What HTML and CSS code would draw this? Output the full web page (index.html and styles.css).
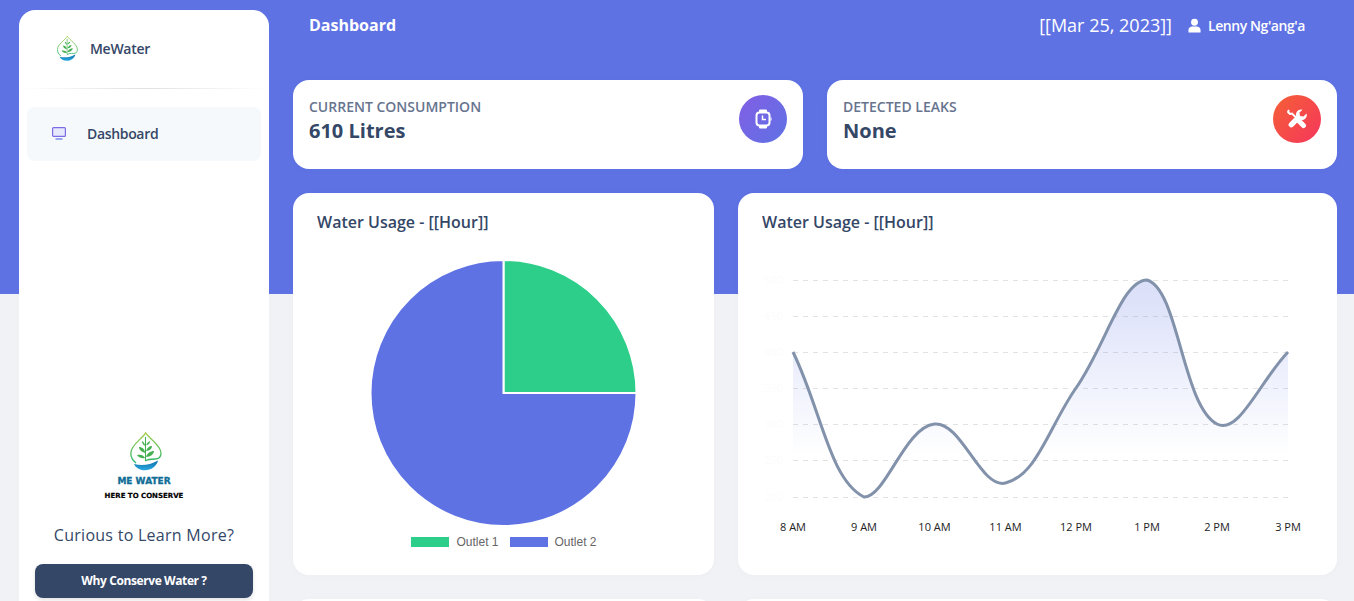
FILE: index.html
```html
<!DOCTYPE html>
<html>
<head>
    <meta charset="UTF-8">
    <title>MeWater Dashboard</title>
    <link rel="stylesheet" href="styles.css">
</head>
<body>
  <div class="banner"></div>

  <!-- logo drawn once, reused in the sidebar twice -->
  <svg class="defs" width="0" height="0">
    <defs>
      <linearGradient id="leafStroke" x1="0" y1="0" x2="0" y2="1">
        <stop offset="0" stop-color="#a5cf4c"/>
        <stop offset="1" stop-color="#27b36d"/>
      </linearGradient>
      <linearGradient id="waterFill" x1="0" y1="0" x2="0" y2="1">
        <stop offset="0" stop-color="#0d6ea8"/>
        <stop offset="1" stop-color="#2aa9e0"/>
      </linearGradient>
      <symbol id="logo" viewBox="0 0 32 39">
        <path d="M6 31C2 28 .8 25 .8 21C.8 13 12 7 15.700 .8C19.500 7 31 13 31 21C31 25 29 27 25 27C21 27 18 27 15 29" fill="none" stroke="url(#leafStroke)" stroke-width="1.300"/>
        <path d="M15.500 5V28" stroke="#45b04f" stroke-width="1"/>
        <path d="M15 26C12 27 8 25 7 23C10 22 14 23 15 26Z" fill="#45b04f"/>
        <path d="M16 25C17 21 21 19 24 19C24 22 20 25 16 25Z" fill="#45b04f"/>
        <path d="M15 21C12 20 9 18 9 15C12 15 15 17 15 21Z" fill="#45b04f"/>
        <path d="M16 19C17 16 19 14 22 14C22 16 20 19 16 19Z" fill="#45b04f"/>
        <path d="M15 14C13 13 12 11 12 9C14 10 15 12 15 14Z" fill="#45b04f"/>
        <path d="M16 13C17 11 18 10 20 9C20 11 19 13 16 13Z" fill="#45b04f"/>
        <path d="M4 32C12 34 20 33 28 28.500C27 34 21 38.300 15 38.300C10 38.300 6 36 4 32Z" fill="url(#waterFill)"/>
      </symbol>
      <linearGradient id="areaFill" gradientUnits="userSpaceOnUse" x1="0" y1="290" x2="0" y2="455">
        <stop offset="0" stop-color="#5e72e4" stop-opacity="0.22"/>
        <stop offset="1" stop-color="#5e72e4" stop-opacity="0"/>
      </linearGradient>
    </defs>
  </svg>

  <aside class="sidebar">
    <div class="brand">
      <svg class="brand-logo"><use href="#logo"/></svg>
      <span>MeWater</span>
    </div>
    <div class="divider"></div>
    <a class="nav-item">
      <svg class="nav-icon" viewBox="0 0 14 13">
        <rect x="0.6" y="0.6" width="12.8" height="8.8" rx="1" fill="#e6e9fb" stroke="#7d6be6" stroke-width="1.2"/>
        <path d="M3.5 12H10.5" stroke="#5e72e4" stroke-width="1.2"/>
      </svg>
      <span>Dashboard</span>
    </a>
    <div class="side-bottom">
      <svg class="big-logo"><use href="#logo"/></svg>
      <div class="logo-name">ME WATER</div>
      <div class="logo-tag">HERE TO CONSERVE</div>
      <div class="curious">Curious to Learn More?</div>
      <a class="side-btn">Why Conserve Water ?</a>
    </div>
  </aside>

  <main class="main">
    <header class="topbar">
      <div class="page-title">Dashboard</div>
      <div class="top-right">
        <span class="top-date">[[Mar 25, 2023]]</span>
        <span class="top-user">
          <svg class="user-icon" viewBox="0 0 14 15">
            <circle cx="7" cy="4" r="3.7" fill="#fff"/>
            <path d="M0.5 15V12.5C0.5 10 2.5 8.6 4.5 8.6H9.5C11.5 8.6 13.500 10 13.500 12.5V15Z" fill="#fff"/>
          </svg>
          Lenny Ng'ang'a
        </span>
      </div>
    </header>

    <section class="stats">
      <div class="card stat">
        <div>
          <div class="stat-label">CURRENT CONSUMPTION</div>
          <div class="stat-value">610 Litres</div>
        </div>
        <div class="stat-icon icon-primary">
          <svg width="20" height="20" viewBox="0 0 20 20">
            <rect x="3.500" y="3.500" width="13" height="13" rx="3" fill="none" stroke="#fff" stroke-width="2"/>
            <path d="M6.500 3V1H13.500V3M6.500 17V19H13.500V17" fill="#fff" stroke="#fff"/>
            <path d="M9.500 6.500V10.500H13" fill="none" stroke="#fff" stroke-width="1.500"/>
            <path d="M17.500 8.500H18.500V11.500H17.500Z" fill="#fff"/>
          </svg>
        </div>
      </div>
      <div class="card stat">
        <div>
          <div class="stat-label">DETECTED LEAKS</div>
          <div class="stat-value">None</div>
        </div>
        <div class="stat-icon icon-danger">
          <svg width="20" height="20" viewBox="0 0 20 20">
            <path d="M14 .5a5 5 0 0 0-4.800 6.500L2.200 14a2.700 2.700 0 0 0 3.800 3.800L13 10.800a5 5 0 0 0 6.500-6.300L16.500 7.500 13 7 12.500 3.500 15.500 .7a5 5 0 0 0-1.500-.2z" fill="#fff"/>
            <path d="M2 1L1 3L3 5L5 4.500L9 8.500M11 11L16.500 17.500" fill="none" stroke="#fff" stroke-width="2"/>
            <path d="M12 12L16.500 16.500" stroke="#fff" stroke-width="5" stroke-linecap="round"/>
          </svg>
        </div>
      </div>
    </section>

    <section class="charts">
      <div class="card chart-card">
        <h3 class="chart-title">Water Usage - [[Hour]]</h3>
        <svg class="pie" width="421" height="270" viewBox="293 260 421 270">
          <path d="M503.500 393L503.500 260A133 133 0 0 1 636.500 393Z" fill="#2dce89" stroke="#fff" stroke-width="2"/>
          <path d="M503.500 393L636.500 393A133 133 0 1 1 503.500 260Z" fill="#5e72e4" stroke="#fff" stroke-width="2"/>
        </svg>
        <div class="legend">
          <span class="swatch swatch-green"></span><span class="legend-text">Outlet 1</span>
          <span class="swatch swatch-blue"></span><span class="legend-text">Outlet 2</span>
        </div>
      </div>

      <div class="card chart-card">
        <h3 class="chart-title">Water Usage - [[Hour]]</h3>
        <svg class="line-chart" width="599" height="300" viewBox="738 260 599 300">
          <g class="grid-lines">
            <path d="M793 280H1288"/>
            <path d="M793 316H1288"/>
            <path d="M793 352H1288"/>
            <path d="M793 388H1288"/>
            <path d="M793 424H1288"/>
            <path d="M793 460H1288"/>
            <path d="M793 497H1288"/>
          </g>
          <g class="y-labels">
            <text x="783" y="284">500</text>
            <text x="783" y="320">450</text>
            <text x="783" y="356">400</text>
            <text x="783" y="392">350</text>
            <text x="783" y="428">300</text>
            <text x="783" y="464">250</text>
            <text x="783" y="501">200</text>
          </g>
          <path fill="url(#areaFill)" d="M793 352C821.400 410 829.200 479.300 864 497C885.800 497 904.900 426.900 934.500 424C961.500 421.300 980.700 489.300 1005.500 483C1037.300 474.900 1048.900 426.800 1076 388C1105.500 345.600 1122 280 1147 280C1178.400 288.500 1182.500 406.400 1217 424C1238.900 435.200 1259.600 381.600 1288 352V497H793Z"/>
          <path class="line" d="M793 352C821.400 410 829.200 479.300 864 497C885.800 497 904.900 426.900 934.500 424C961.500 421.300 980.700 489.300 1005.500 483C1037.300 474.900 1048.900 426.800 1076 388C1105.500 345.600 1122 280 1147 280C1178.400 288.500 1182.500 406.400 1217 424C1238.900 435.200 1259.600 381.600 1288 352"/>
          <g class="x-labels">
            <text x="793" y="531">8 AM</text>
            <text x="864" y="531">9 AM</text>
            <text x="934.500" y="531">10 AM</text>
            <text x="1005.500" y="531">11 AM</text>
            <text x="1076" y="531">12 PM</text>
            <text x="1147" y="531">1 PM</text>
            <text x="1217" y="531">2 PM</text>
            <text x="1288" y="531">3 PM</text>
          </g>
        </svg>
      </div>
    </section>

    <section class="charts">
      <div class="card next-card"></div>
      <div class="card next-card"></div>
    </section>
  </main>
</body>
</html>
```

FILE: styles.css
```css
html, body {
  margin: 0;
  height: 100%;
}
body {
  background-color: #f0f2f5;
  color: #344767;
  display: flex;
  align-items: flex-start;
  font-family: "Open Sans", Arial, sans-serif;
  overflow: hidden;
}
.banner {
  background-color: #5e72e4;
  height: 294px;
  left: 0;
  position: absolute;
  right: 0;
  top: 0;
}
.defs {
  position: absolute;
}

/* sidebar */
.sidebar {
  background-color: #fff;
  border-radius: 16px;
  box-sizing: border-box;
  display: flex;
  flex-direction: column;
  flex: none;
  height: 612px;
  margin: 10px 0 0 19px;
  padding: 0 8px 24px;
  position: relative;
  width: 250px;
}
.brand {
  align-items: center;
  box-sizing: border-box;
  display: flex;
  font-size: 14px;
  font-weight: 600;
  gap: 12px;
  height: 78px;
  letter-spacing: -.28px;
  padding: 0 0 1px 30px;
}
.brand-logo {
  height: 27px;
  width: 21px;
}
.divider {
  background: linear-gradient(90deg, rgba(0,0,0,0), rgba(0,0,0,.12), rgba(0,0,0,0));
  height: 1px;
  margin: 0 -8px 18px;
}
.nav-item {
  align-items: center;
  background-color: #f6f9fc;
  border-radius: 8px;
  box-sizing: border-box;
  display: flex;
  font-size: 14px;
  font-weight: 600;
  gap: 21px;
  height: 54px;
  letter-spacing: -.33px;
  padding: 0 0 1px 25px;
}
.nav-icon {
  height: 13px;
  width: 14px;
}
.side-bottom {
  align-items: center;
  display: flex;
  flex-direction: column;
  margin-top: auto;
}
.big-logo {
  height: 39px;
  margin-left: 3px;
  width: 32px;
}
.logo-name {
  -webkit-text-stroke: .3px #0f6d96;
  color: #0f6d96;
  font-family: "DejaVu Sans", sans-serif;
  font-size: 9px;
  font-weight: 700;
  line-height: 12px;
  margin-top: 4px;
}
.logo-tag {
  -webkit-text-stroke: .2px #000;
  color: #000;
  font-family: "DejaVu Sans", sans-serif;
  font-size: 7px;
  font-weight: 700;
  line-height: 10px;
  margin-top: 4px;
}
.curious {
  font-size: 16px;
  font-weight: 500;
  letter-spacing: .27px;
  line-height: 22px;
  margin-top: 23px;
}
.side-btn {
  background-color: #344767;
  border-radius: 8px;
  box-shadow: 0 2px 4px rgba(0,0,0,.12);
  box-sizing: border-box;
  color: #fff;
  font-size: 12px;
  font-weight: 700;
  height: 34px;
  letter-spacing: -.4px;
  line-height: 34px;
  margin-top: 18px;
  text-align: center;
  width: 218px;
}

/* main column */
.main {
  flex: 1;
  margin: 0 17px 0 24px;
  min-width: 0;
  position: relative;
}
.topbar {
  align-items: center;
  color: #fff;
  display: flex;
  height: 50px;
  justify-content: space-between;
  margin-bottom: 30px;
  padding: 0 32px 0 16px;
}
.page-title {
  font-size: 16px;
  font-weight: 700;
}
.top-right {
  align-items: center;
  display: flex;
  gap: 16px;
}
.top-date {
  font-size: 18px;
}
.top-user {
  align-items: center;
  display: flex;
  font-size: 14px;
  font-weight: 600;
  gap: 7px;
  letter-spacing: -.43px;
}
.user-icon {
  height: 15px;
  width: 13px;
}
.card {
  background-color: #fff;
  border-radius: 16px;
  box-shadow: 0 1px 8px rgba(0,0,0,.02);
}
.stats {
  display: grid;
  gap: 24px;
  grid-template-columns: 1fr 1fr;
  margin-bottom: 24px;
}
.stat {
  align-items: flex-start;
  box-sizing: border-box;
  display: flex;
  height: 89px;
  justify-content: space-between;
  padding: 15px 16px;
}
.stat-label {
  color: #67748e;
  font-size: 14px;
  font-weight: 600;
  line-height: 24px;
}
.stat-value {
  font-size: 20px;
  font-weight: 700;
  line-height: 24px;
}
.stat-icon {
  align-items: center;
  border-radius: 50%;
  display: flex;
  height: 48px;
  justify-content: center;
  width: 48px;
}
.icon-primary {
  background-image: linear-gradient(310deg, #5e72e4, #825ee4);
}
.icon-danger {
  background-image: linear-gradient(310deg, #f5365c, #f56036);
}
.charts {
  display: grid;
  gap: 24px;
  grid-template-columns: 421px 1fr;
  margin-bottom: 24px;
}
.chart-card {
  height: 382px;
}
.chart-title {
  font-size: 16px;
  font-weight: 600;
  line-height: 22px;
  margin: 0 0 27px;
  padding: 18px 24px 0;
}
.pie, .line-chart {
  display: block;
}
.legend {
  align-items: center;
  color: #666;
  display: flex;
  font-family: "Liberation Sans", Arial, sans-serif;
  font-size: 12px;
  height: 24px;
  justify-content: center;
  padding-left: 1px;
}
.swatch {
  height: 10px;
  margin-right: 7px;
  width: 38px;
}
.swatch-green {
  background-color: #2dce89;
}
.swatch-blue {
  background-color: #5e72e4;
}
.legend-text {
  margin-right: 11px;
}
.legend-text:last-child {
  margin-right: 0;
}
.grid-lines path {
  fill: none;
  shape-rendering: crispEdges;
  stroke: #e2e2e2;
  stroke-dasharray: 5 5;
}
.y-labels text {
  fill: #fcfcfc;
  font-size: 11px;
  text-anchor: end;
}
.x-labels text {
  fill: #222;
  font-size: 11px;
  text-anchor: middle;
}
.line {
  fill: none;
  stroke: #8392ab;
  stroke-width: 3;
}
.next-card {
  height: 100px;
}
```
